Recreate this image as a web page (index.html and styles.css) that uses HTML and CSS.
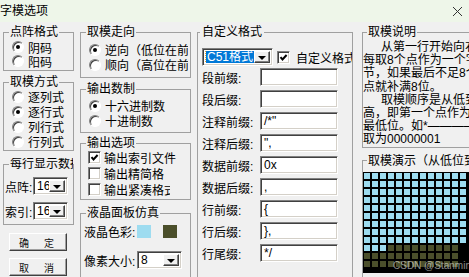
FILE: index.html
```html
<!DOCTYPE html>
<html lang="zh-CN">
<head>
    <meta charset="UTF-8">
    <title>字模选项</title>
    <link rel="stylesheet" href="styles.css">
</head>
<body>
    <div class="titlebar">
        <span class="title">字模选项</span>
        <svg class="close" width="11" height="11" viewBox="0 0 11 11"><path d="M1 1L10 10M10 1L1 10" stroke="#333" stroke-width="1" fill="none"/></svg>
    </div>

    <div class="dialog">
        <!-- left column -->
        <div class="col col-1">
            <fieldset class="grp g-dot">
                <legend>点阵格式</legend>
                <label class="opt r14"><span class="radio on"></span>阴码</label>
                <label class="opt r14"><span class="radio"></span>阳码</label>
            </fieldset>

            <fieldset class="grp g-scan">
                <legend>取模方式</legend>
                <label class="opt r15"><span class="radio"></span>逐列式</label>
                <label class="opt r15"><span class="radio on"></span>逐行式</label>
                <label class="opt r15"><span class="radio"></span>列行式</label>
                <label class="opt r15"><span class="radio"></span>行列式</label>
            </fieldset>

            <fieldset class="grp g-line">
                <legend class="clip">每行显示数据</legend>
                <div class="spin-row">
                    <span class="lbl">点阵:</span>
                    <span class="combo cb-small"><span class="val">16</span><span class="arrow"></span></span>
                </div>
                <div class="spin-row second">
                    <span class="lbl">索引:</span>
                    <span class="combo cb-small"><span class="val">16</span><span class="arrow"></span></span>
                </div>
            </fieldset>

            <div class="btn"><span>确</span><span>定</span></div>
            <div class="btn second"><span>取</span><span>消</span></div>
        </div>

        <!-- middle column -->
        <div class="col col-2">
            <fieldset class="grp g-dir">
                <legend>取模走向</legend>
                <label class="opt r15"><span class="radio on"></span>逆向（低位在前）</label>
                <label class="opt r15"><span class="radio"></span>顺向（高位在前）</label>
            </fieldset>

            <fieldset class="grp g-radix">
                <legend>输出数制</legend>
                <label class="opt r15"><span class="radio on"></span>十六进制数</label>
                <label class="opt r15"><span class="radio"></span>十进制数</label>
            </fieldset>

            <fieldset class="grp g-out">
                <legend>输出选项</legend>
                <label class="opt r16"><span class="check"><svg width="11" height="11" viewBox="0 0 11 11"><path d="M2.5 5.2L4.5 7.4L8.6 3" stroke="#000" stroke-width="2" fill="none"/></svg></span><span class="ctext">输出索引文件</span></label>
                <label class="opt r16"><span class="check"></span><span class="ctext cut-a">输出精简格式</span></label>
                <label class="opt r16"><span class="check"></span><span class="ctext cut-b">输出紧凑格式</span></label>
            </fieldset>

            <fieldset class="grp g-lcd">
                <legend>液晶面板仿真</legend>
                <div class="lcd-row">
                    <span class="lbl wide">液晶色彩:</span>
                    <span class="swatch sw-on"></span>
                    <span class="swatch sw-off"></span>
                </div>
                <div class="lcd-row second">
                    <span class="lbl wide">像素大小:</span>
                    <span class="combo cb-px"><span class="val">8</span><span class="arrow"></span></span>
                </div>
            </fieldset>
        </div>

        <!-- custom format column -->
        <div class="col col-3">
            <fieldset class="grp g-fmt">
                <legend>自定义格式</legend>
                <div class="fmt-top">
                    <span class="combo cb-fmt"><span class="val"><span class="sel">C51格式</span></span><span class="arrow"></span></span>
                    <span class="check"><svg width="11" height="11" viewBox="0 0 11 11"><path d="M2.5 5.2L4.5 7.4L8.6 3" stroke="#000" stroke-width="2" fill="none"/></svg></span>
                    <span class="fmt-custom">自定义格式</span>
                </div>
                <div class="field-row"><span class="flabel">段前缀:</span><span class="field"></span></div>
                <div class="field-row"><span class="flabel">段后缀:</span><span class="field"></span></div>
                <div class="field-row"><span class="flabel">注释前缀:</span><span class="field">/*"</span></div>
                <div class="field-row"><span class="flabel">注释后缀:</span><span class="field">",</span></div>
                <div class="field-row"><span class="flabel">数据前缀:</span><span class="field">0x</span></div>
                <div class="field-row"><span class="flabel">数据后缀:</span><span class="field">,</span></div>
                <div class="field-row"><span class="flabel">行前缀:</span><span class="field">{</span></div>
                <div class="field-row"><span class="flabel">行后缀:</span><span class="field">},</span></div>
                <div class="field-row"><span class="flabel">行尾缀:</span><span class="field">*/</span></div>
            </fieldset>
        </div>

        <!-- right column -->
        <div class="col col-4">
            <fieldset class="grp g-note">
                <legend>取模说明</legend>
                <p class="indent">从第一行开始向右取</p>
                <p>每取8个点作为一个字节，</p>
                <p>节，如果最后不足8个</p>
                <p>点就补满8位。</p>
                <p class="indent">取模顺序是从低到高</p>
                <p>高，即第一个点作为</p>
                <p>最低位。如*———————</p>
                <p>取为00000001</p>
            </fieldset>

            <fieldset class="grp g-demo">
                <legend>取模演示（从低位到高位）</legend>
                <div class="lcd" id="lcd"><span class="mark" id="mark">CSDN @Stanmin</span></div>
            </fieldset>
        </div>
    </div>

    <script>
        document.addEventListener("DOMContentLoaded", () => {
            const lcd = document.getElementById("lcd");
            const mark = document.getElementById("mark");

            for (let r = 0; r < 12; r++) {
                for (let c = 0; c < 13; c++) {
                    const cell = document.createElement("span");
                    cell.className = "px";
                    if (r < 9 || (r === 9 && c < 3)) {
                        cell.classList.add("on");
                    } else if (c < 12) {
                        cell.classList.add("off");
                    }
                    lcd.insertBefore(cell, mark);
                }
            }
        });
    </script>
</body>
</html>
```

FILE: styles.css
```css
* {
    box-sizing: border-box;
}

html, body {
    margin: 0;
    padding: 0;
}

body {
    width: 469px;
    height: 277px;
    overflow: hidden;
    background-color: #f0f0f0;
    font-family: "Liberation Sans", "Noto Sans CJK SC", sans-serif;
    font-size: 12px;
    color: #000;
}

/* title bar */
.titlebar {
    height: 22px;
    background-color: #eef6e9;
    display: flex;
    align-items: center;
    justify-content: space-between;
    padding-right: 6px;
}

.title {
    line-height: 12px;
}

.close {
    display: block;
}

/* dialog body */
.dialog {
    display: flex;
    height: 290px;
    padding: 4px 0 0 3px;
}

.col {
    display: flex;
    flex-direction: column;
    flex-shrink: 0;
}

.col-1 { width: 71px; }
.col-2 { width: 111px; margin-left: 6px; }
.col-3 { width: 156px; margin-left: 6px; }
.col-4 { width: 160px; margin-left: 9px; }

/* group boxes */
.grp {
    margin: 0;
    padding: 0 2px;
    border: 1px solid #a0a0a0;
    min-width: 0;
}

.grp legend {
    padding: 0 1px;
    margin-left: 3px;
    font-size: 12px;
    line-height: 12px;
    white-space: nowrap;
}

.grp legend.clip {
    max-width: 64px;
    overflow: hidden;
}

.g-dot { padding-top: 2px; padding-bottom: 2px; }
.g-scan { margin-top: 5px; padding-top: 1px; padding-bottom: 1px; }
.g-line { margin-top: 7px; padding: 7px 1px 4px 1px; }
.g-line legend { margin-left: 4px; }

.g-dir { padding-top: 4px; padding-bottom: 5px; }
.g-radix { margin-top: 5px; padding-top: 3px; padding-bottom: 4px; }
.g-out { margin-top: 4px; padding-top: 0; padding-bottom: 2px; }
.g-lcd { margin-top: 7px; padding-top: 5px; flex: 1; }

.g-fmt { padding: 10px 0 0 4px; flex: 1; }
.g-fmt legend { margin-left: -2px; padding: 0 2px; }

.g-note { padding: 3px 0 0 0; }
.g-note legend { margin-left: 4px; }
.g-demo { margin-top: 7px; padding: 5px 0 0 0; flex: 1; }
.g-demo legend { margin-left: 4px; }

/* radios and checkboxes */
.opt {
    display: flex;
    align-items: center;
    gap: 4px;
    padding-left: 6px;
    white-space: nowrap;
    overflow: hidden;
}

.r14 { height: 14px; }
.r15 { height: 15px; }
.r16 { height: 16px; gap: 3px; padding-left: 5px; }

.radio {
    position: relative;
    flex-shrink: 0;
    width: 12px;
    height: 12px;
    border-radius: 50%;
    background: #fff;
    border: 1px solid;
    border-color: #808080 #fff #fff #808080;
    box-shadow: inset 1px 1px 0 #404040;
}

.radio.on::after {
    content: "";
    position: absolute;
    left: 3px;
    top: 3px;
    width: 4px;
    height: 4px;
    border-radius: 50%;
    background: #000;
}

.check {
    flex-shrink: 0;
    width: 13px;
    height: 13px;
    background: #fff;
    border: 1px solid;
    border-color: #808080 #fff #fff #808080;
    box-shadow: inset 1px 1px 0 #404040, inset -1px -1px 0 #d4d0c8;
}

.check svg {
    display: block;
}

.ctext {
    overflow: hidden;
}

.cut-a { width: 60px; }
.cut-b { width: 66px; }

/* combo boxes */
.combo {
    display: flex;
    flex-shrink: 0;
    height: 18px;
    padding: 2px;
    background: #fff;
    border: 1px solid;
    border-color: #808080 #fff #fff #808080;
    box-shadow: inset 1px 1px 0 #404040, inset -1px -1px 0 #d4d0c8;
}

.combo .val {
    flex: 1;
    padding-left: 1px;
    line-height: 12px;
    overflow: hidden;
    white-space: nowrap;
}

.combo .arrow {
    position: relative;
    width: 16px;
    background: #f0f0f0;
    border: 1px solid;
    border-color: #fff #404040 #404040 #fff;
    box-shadow: inset -1px -1px 0 #808080;
}

.combo .arrow::after {
    content: "";
    position: absolute;
    left: 3px;
    top: 4px;
    border-left: 4px solid transparent;
    border-right: 4px solid transparent;
    border-top: 4px solid #000;
}

.cb-small { width: 35px; }
.cb-px { width: 45px; }
.cb-fmt { width: 71px; }

.sel {
    display: inline-block;
    height: 12px;
    padding: 0 1px;
    background: #0078d7;
    color: #fff;
    outline: 1px dotted #f5a623;
    line-height: 12px;
}

/* rows */
.spin-row {
    display: flex;
    align-items: center;
    height: 18px;
}

.spin-row.second {
    margin-top: 7px;
}

.lbl {
    width: 28px;
    flex-shrink: 0;
    white-space: nowrap;
}

.lbl.wide {
    width: 54px;
    padding-left: 1px;
}

.lcd-row {
    display: flex;
    align-items: center;
    height: 15px;
}

.lcd-row.second {
    height: 18px;
    margin-top: 12px;
}

.swatch {
    width: 14px;
    height: 13px;
    flex-shrink: 0;
}

.sw-on { background: #9edcf0; }
.sw-off { background: #4b4f2b; margin-left: 12px; }

/* buttons */
.btn {
    width: 58px;
    height: 18px;
    margin: 8px 0 0 6px;
    padding: 0 12px 0 9px;
    display: flex;
    align-items: center;
    justify-content: space-between;
    background: #f0f0f0;
    border: 1px solid;
    border-color: #fff #404040 #404040 #fff;
    box-shadow: inset -1px -1px 0 #a0a0a0;
    font-size: 10px;
    color: #111;
}

.btn.second {
    margin-top: 7px;
}

/* custom format */
.fmt-top {
    display: flex;
    align-items: center;
    height: 18px;
    overflow: hidden;
    white-space: nowrap;
}

.fmt-top .check {
    margin-left: 4px;
}

.fmt-custom {
    margin-left: 6px;
}

.field-row {
    display: flex;
    align-items: center;
    height: 18px;
    margin-top: 4px;
}

.fmt-top + .field-row {
    margin-top: 2px;
}

.flabel {
    width: 58px;
    flex-shrink: 0;
    white-space: nowrap;
}

.field {
    width: 78px;
    height: 18px;
    padding: 2px 0 0 3px;
    background: #fff;
    border: 1px solid;
    border-color: #808080 #fff #fff #808080;
    box-shadow: inset 1px 1px 0 #404040, inset -1px -1px 0 #d4d0c8;
    line-height: 13px;
    white-space: nowrap;
}

/* notes */
.g-note p {
    margin: 0;
    line-height: 13.2px;
    white-space: nowrap;
}

.g-note p.indent {
    padding-left: 18px;
}

/* lcd preview */
.lcd {
    position: relative;
    display: grid;
    grid-template-columns: repeat(13, 6px);
    grid-auto-rows: 6px;
    gap: 2px;
    width: 120px;
    height: 101px;
    padding: 1px;
    background: #000;
}

.px.on { background: #9edcf0; }
.px.off { background: #4b4f2b; }

.mark {
    position: absolute;
    left: 30px;
    top: 89px;
    font-size: 10px;
    line-height: 10px;
    color: rgba(255, 255, 255, 0.55);
    white-space: nowrap;
}
```
